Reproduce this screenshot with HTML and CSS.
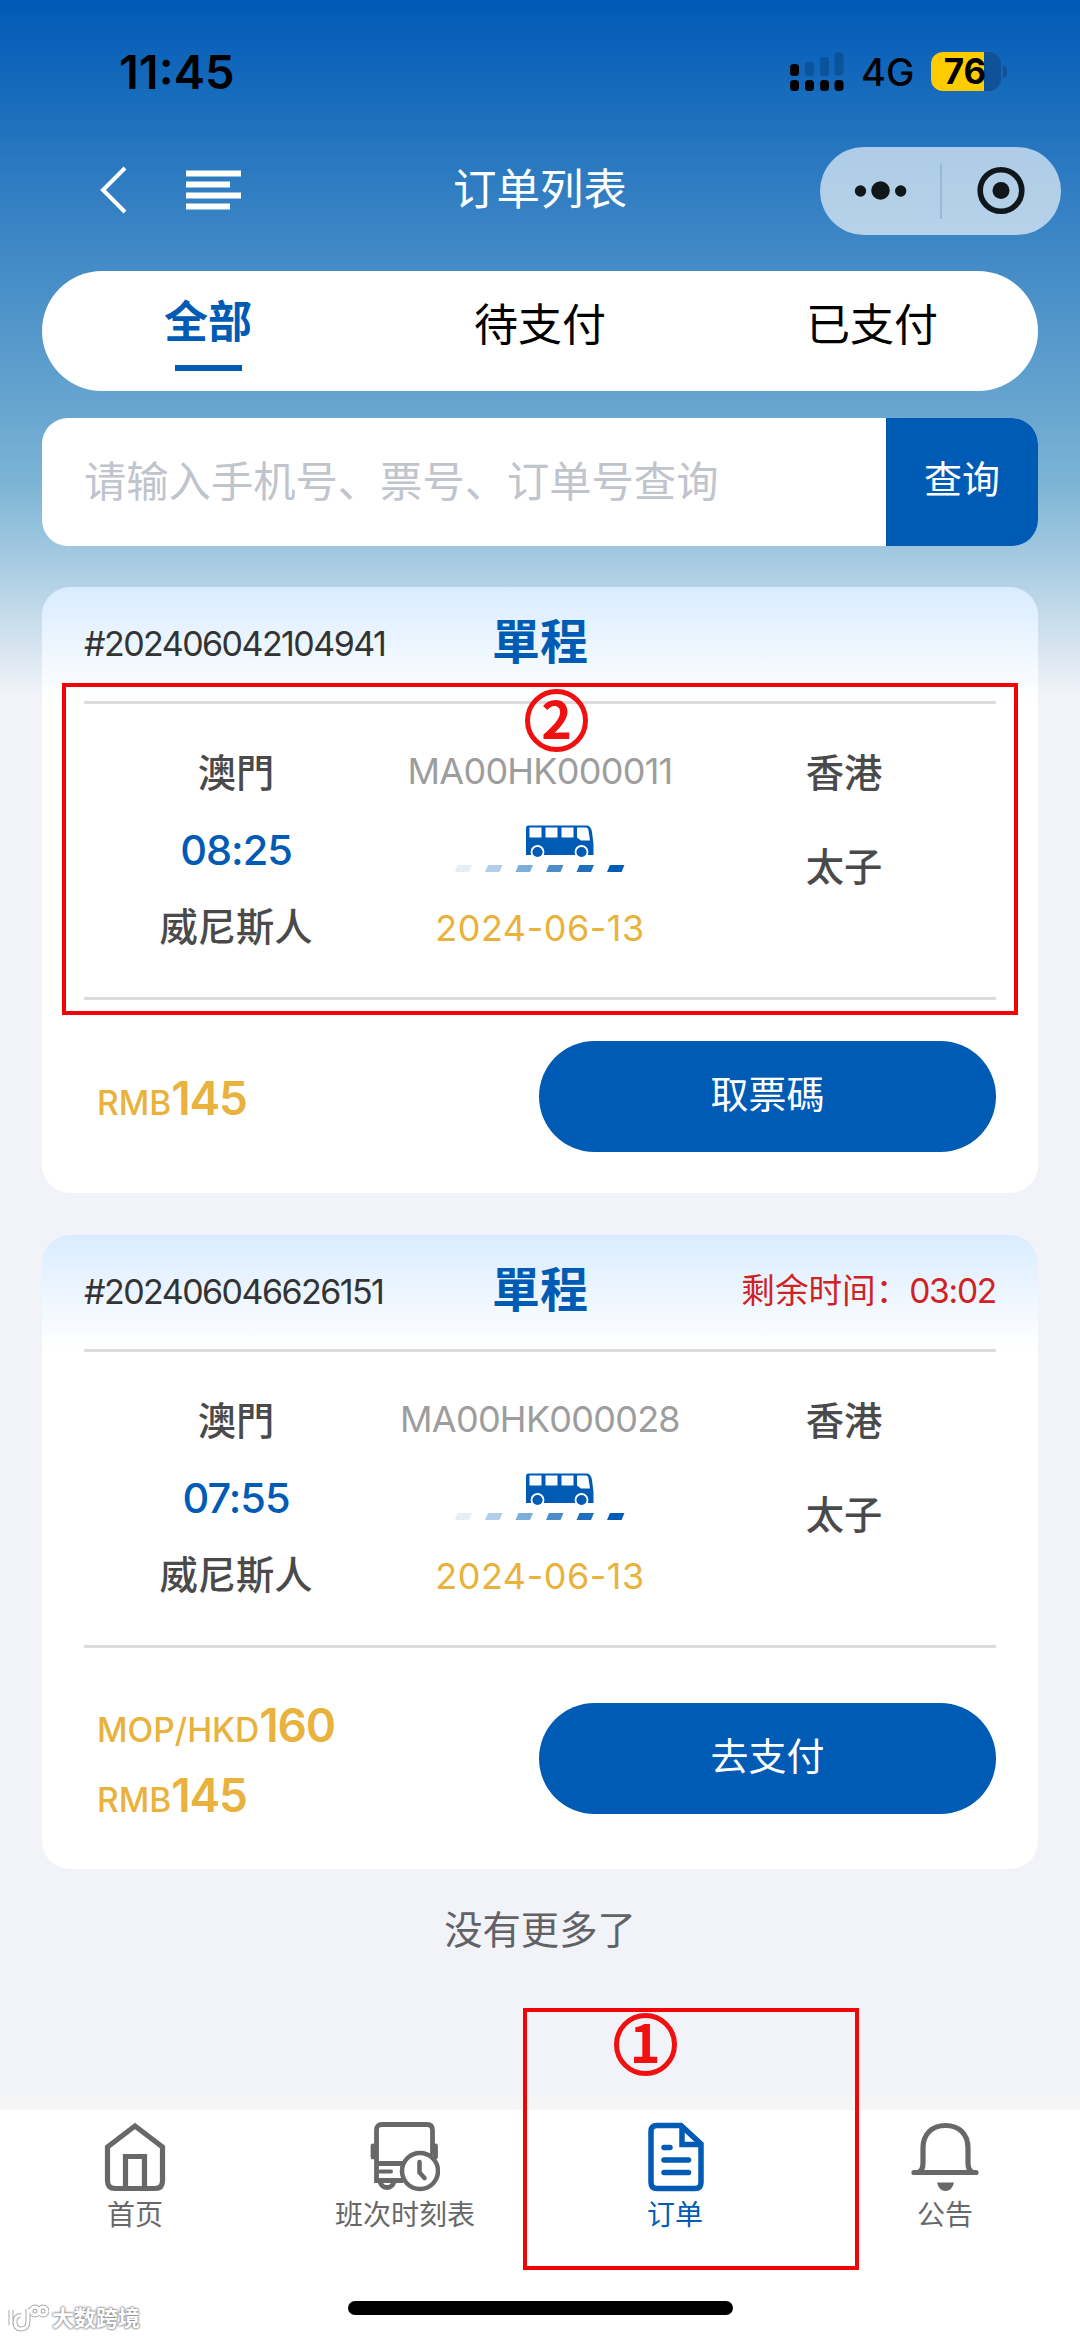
FILE: index.html
```html
<!DOCTYPE html>
<html lang="zh-CN">
<head>
<meta charset="utf-8">
<title>订单列表</title>
<link rel="stylesheet" href="styles.css">
</head>
<body>
<svg width="0" height="0" class="defs">
  <symbol id="bus" viewBox="0 0 170 48">
    <path fill="#005bb5" d="M73 0.500H132Q136 1 137 7L138.500 19V30H71V3Q71 0.500 73 .5z"/>
    <path fill="#fff" d="M74.500 2.500h12v10h-12zM90.500 2.500h12v10h-12zM106.500 2.500h12v10h-12zM122 2.500h9q2 0 2.500 3l1.500 10h-9l-4-3z"/>
    <circle cx="82.500" cy="27" r="6" fill="#005bb5" stroke="#fff" stroke-width="1.800"/>
    <circle cx="126.500" cy="27" r="6" fill="#005bb5" stroke="#fff" stroke-width="1.800"/>
    <g fill="#005bb5">
      <path opacity=".1" d="M2.500 40H17l-3 7H0z"/><path opacity=".3" d="M33 40h14.500l-3 7H30z"/>
      <path opacity=".5" d="M63.500 40H78l-3 7H60.500z"/><path opacity=".7" d="M94 40h14.500l-3 7H91z"/>
      <path opacity=".88" d="M124.500 40H139l-3 7h-14.500z"/><path d="M155 40h14.500l-3 7H152z"/>
    </g>
  </symbol>
</svg>
<div class="screen">
  <header class="status">
    <span class="clock">11:45</span>
    <svg class="signal" width="56" height="40" viewBox="0 0 56 40">
      <g fill="#003a70" opacity=".4"><rect x="16" y="10" width="9" height="14" rx="3"/><rect x="31" y="5" width="9" height="19" rx="3"/><rect x="45.500" y="0.500" width="9" height="23" rx="3"/></g>
      <rect x="1" y="12" width="9" height="12" rx="3.500"/><rect x="1" y="28" width="9" height="11" rx="3.500"/><rect x="16" y="28" width="9" height="11" rx="3.500"/><rect x="31" y="28" width="9" height="11" rx="3.500"/><rect x="45.500" y="28" width="9" height="11" rx="3.500"/>
    </svg>
    <span class="net">4G</span>
    <span class="battery">76</span><span class="nub"></span>
  </header>
  <nav class="titlebar">
    <svg class="back" width="30" height="50" viewBox="0 0 30 50"><path d="M26 2L4 24l22 22" fill="none" stroke="#fff" stroke-width="4"/></svg>
    <svg class="menu" width="56" height="42" viewBox="0 0 56 42"><path d="M0 3.500h55M0 14.500h44M0 25.500h55M0 36.500h44" stroke="#fff" stroke-width="6"/></svg>
    <h1 class="title">订单列表</h1>
    <svg class="capsule" width="241" height="88" viewBox="0 0 241 88">
      <rect width="241" height="88" rx="44" fill="#fff" fill-opacity=".63"/>
      <path d="M121 16.500v55.500" stroke="#8fb0cc" stroke-width="1.500"/>
      <g fill="#10171b"><circle cx="40.500" cy="44" r="5.700"/><circle cx="60.500" cy="43.500" r="9.300"/><circle cx="80.700" cy="44" r="5.700"/><circle cx="181" cy="43.500" r="8.500"/></g>
      <circle cx="181" cy="43.500" r="20.800" fill="none" stroke="#10171b" stroke-width="5.600"/>
    </svg>
  </nav>
  <div class="tabs"><span class="tab active">全部</span><span class="tab">待支付</span><span class="tab">已支付</span></div>
  <div class="search"><span class="placeholder">请输入手机号、票号、订单号查询</span><span class="query">查询</span></div>

  <section class="card">
    <div class="card-head"><span class="order">#202406042104941</span><b class="kind">單程</b><span class="timer"></span></div>
    <div class="trip">
      <div class="col"><span>澳門</span><span class="time">08:25</span><span>威尼斯人</span></div>
      <div class="col"><span class="code">MA00HK000011</span><svg class="busline"><use href="#bus"/></svg><span class="date">2024-06-13</span></div>
      <div class="col wide"><span>香港</span><span>太子</span></div>
      <div class="frame trip-frame"></div><div class="mark trip-mark">2</div>
    </div>
    <div class="card-foot"><div class="prices"><div class="price">RMB<b>145</b></div></div><span class="btn">取票碼</span></div>
  </section>

  <section class="card second">
    <div class="card-head"><span class="order">#202406046626151</span><b class="kind">單程</b><span class="timer">剩余时间：<span class="left">03:02</span></span></div>
    <div class="trip">
      <div class="col"><span>澳門</span><span class="time">07:55</span><span>威尼斯人</span></div>
      <div class="col"><span class="code">MA00HK000028</span><svg class="busline"><use href="#bus"/></svg><span class="date">2024-06-13</span></div>
      <div class="col wide"><span>香港</span><span>太子</span></div>
    </div>
    <div class="card-foot"><div class="prices"><div class="price">MOP/HKD<b>160</b></div><div class="price">RMB<b>145</b></div></div><span class="btn">去支付</span></div>
  </section>
  <p class="end">没有更多了</p>

  <footer class="bottom">
    <div class="item">
      <svg width="70" height="70" viewBox="0 0 70 70" fill="none" stroke="#686868" stroke-width="5.200"><path d="M35 4L62.500 25v34q0 7.500-7.500 7.500H15Q7.500 66.500 7.500 59V25z"/><path d="M25.500 66V34.500h19V66"/></svg>
      <span>首页</span>
    </div>
    <div class="item">
      <svg width="70" height="70" viewBox="0 0 70 70" fill="none" stroke="#686868" stroke-width="4.800"><path d="M33 58.500H6.500V8q0-5.500 5.500-5.500h45q5.500 0 5.500 5.500v25M7 41.500h28" /><path d="M3 24v11M65.500 24v11" stroke-linecap="round"/><path d="M10 49.500h11" stroke-width="4" stroke-linecap="round"/><path d="M10 60q2 5.500 7 5.500t7-5.500"/><circle cx="50" cy="49" r="18" fill="#fff" stroke-width="4.500"/><path d="M49.500 40v10.500l5 5.500" stroke-linecap="round" stroke-width="4.500"/></svg>
      <span>班次时刻表</span>
    </div>
    <div class="item on">
      <svg width="70" height="70" viewBox="0 0 70 70" fill="none" stroke="#005bb5" stroke-width="5.500"><path d="M41 3.500H17q-6 0-6 6v51q0 6 6 6h38q6 0 6-6V22z"/><path d="M42 4v18.500h18"/><path d="M24 25.500h6M24 38h24.500M24 50.500h24.500" stroke-linecap="round"/></svg>
      <span>订单</span>
    </div>
    <div class="item">
      <svg width="70" height="70" viewBox="0 0 70 70" fill="none" stroke="#686868" stroke-width="5.200"><path d="M9 50q4-2 4-9V26C13 12 22 3.500 35.500 3.500S58 12 58 26v15q0 7 4 9"/><path d="M4 50.500h62" stroke-linecap="round"/><path d="M27 60.500h17q-2 8.500-8.500 8.500T27 60.500z" fill="#686868" stroke="none"/></svg>
      <span>公告</span>
    </div>
    <div class="frame nav-frame"></div><div class="mark nav-mark">1</div>
    <div class="home-bar"></div>
    <div class="watermark">
      <svg width="42" height="30" viewBox="0 0 42 30" fill="none"><g stroke="#aaa" stroke-width="5"><path d="M4 7v15M14 13q-6-1-6 6t6 7q7 0 7-8V6M21 9q2-3 4-2"/><circle cx="28" cy="8" r="4"/><circle cx="36" cy="8" r="4"/></g><g stroke="#fff" stroke-width="3"><path d="M4 7v15M14 13q-6-1-6 6t6 7q7 0 7-8V6M21 9q2-3 4-2"/><circle cx="28" cy="8" r="4"/><circle cx="36" cy="8" r="4"/></g></svg>
      <span>大数跨境</span>
    </div>
  </footer>
</div>
</body>
</html>
```
FILE: styles.css
```css
* { box-sizing: border-box; }
body { margin: 0; }
.defs { position: absolute; }
.screen {
  width: 1080px; height: 2337px; overflow: hidden;
  display: flex; flex-direction: column;
  font-family: Inter, "Noto Sans CJK SC", sans-serif;
  background: linear-gradient(#005ab6 0, #7ab3d4 480px, #f1f3f8 695px);
}
.status { height: 147px; padding: 52px 73px 0 119px; display: flex; align-items: flex-start; line-height: 40px; }
.clock { font-size: 47px; font-weight: 600; margin-right: auto; }
.signal { margin-right: 16px; }
.net { font-size: 38px; font-weight: 500; width: 70px; }
.battery {
  width: 70px; height: 39px; border-radius: 12px; text-align: center; padding-right: 2px;
  background: linear-gradient(90deg, #ffcc00 53px, #105297 53px);
  font-size: 35px; font-weight: 700; line-height: 39px;
}
.nub { width: 4px; height: 12px; margin: 14px 0 0 2px; border-radius: 0 4px 4px 0; background: #105297; }
.titlebar { height: 88px; padding: 0 19px 0 99px; display: flex; align-items: center; }
.menu { margin-left: 57px; }
.title { margin: 0 0 0 211px; font-size: 43.5px; font-weight: 400; color: #fff; line-height: 85px; height: 88px; }
.capsule { margin-left: auto; }
.tabs { height: 120px; margin: 36px 42px 0; border-radius: 60px; background: #fff; display: grid; grid-template-columns: repeat(3, 1fr); }
.tab { font-size: 44px; text-align: center; line-height: 109px; color: #000; }
.active { font-weight: 700; color: #005bb5; line-height: 103px; }
.active::after { content: ""; display: block; width: 67px; height: 6px; margin: -9px auto 0; background: #005bb5; }
.search { height: 128px; margin: 27px 42px 0; border-radius: 26px; background: #fff; overflow: hidden; display: flex; line-height: 128px; }
.placeholder { flex: 1; padding-left: 42px; font-size: 42.3px; color: #c0c4cc; }
.query { width: 152px; background: #005bb5; color: #fff; font-size: 38px; text-align: center; line-height: 122px; }
.card { margin: 41px 42px 0; padding: 0 42px; height: 606px; border-radius: 28px; background: linear-gradient(#d9ecff, #fff 114px); display: flex; flex-direction: column; }
.second { margin-top: 42px; height: 634px; }
.card-head { height: 114px; display: grid; grid-template-columns: 1fr auto 1fr; line-height: 113px; }
.order { font-size: 34px; color: #333; letter-spacing: -1.55px; }
.kind { font-size: 48px; color: #005bb5; font-family: Inter, "Noto Sans CJK TC", sans-serif; line-height: 110px; }
.timer { font-size: 33.6px; color: #d02222; text-align: right; line-height: 111px; }
.left { letter-spacing: -1.3px; }
.trip {
  position: relative; height: 299px; padding-top: 31px; border: solid #dcdcdc; border-width: 3px 0;
  display: grid; grid-template-columns: 1fr 1fr 1fr; text-align: center;
  font-size: 38.3px; font-weight: 500; color: #4a4a4a; line-height: 77px;
  font-family: Inter, "Noto Sans CJK TC", sans-serif;
}
.col { display: flex; flex-direction: column; align-items: center; }
.wide { line-height: 94px; margin-top: -9px; }
.time { font-size: 41.5px; color: #005bb5; letter-spacing: -1px; }
.code { font-size: 36px; font-weight: 400; color: #9d9d9d; line-height: 72px; letter-spacing: -.75px; }
.busline { width: 170px; height: 48px; margin: 18px 0; }
.date { font-size: 36px; font-weight: 400; color: #e8b23c; line-height: 75px; letter-spacing: .5px; }
.card-foot { flex: 1; display: flex; justify-content: space-between; align-items: center; padding-left: 13px; }
.prices { padding-top: 12px; }
.price { font-size: 33.5px; font-weight: 500; color: #e8b23c; line-height: 70px; }
.price b { font-size: 46px; font-weight: 600; line-height: 1; letter-spacing: -1.2px; }
.btn { width: 457px; height: 111px; border-radius: 56px; background: #005bb5; color: #fff; font-size: 38px; line-height: 107px; text-align: center; font-family: Inter, "Noto Sans CJK TC", sans-serif; }
.end { margin: 41px 0 0; height: 40px; line-height: 40px; font-size: 38.3px; text-align: center; color: #606266; }
.bottom { position: relative; margin-top: auto; height: 241px; background: #fff; border-top: 14px solid #f5f5f5; display: grid; grid-template-columns: repeat(4, 1fr); }
.item { display: flex; flex-direction: column; align-items: center; padding-top: 12px; font-size: 28px; line-height: 46px; color: #686868; }
.on { color: #005bb5; }
.frame { position: absolute; border: 4.5px solid #f30404; }
.trip-frame { left: -22px; top: -21px; width: 956px; height: 332px; }
.nav-frame { left: 523px; top: -102px; width: 336px; height: 262px; }
.mark {
  position: absolute; width: 63px; height: 63px; border: 5px solid #f01010; border-radius: 50%;
  color: #f01010; font: 700 52px/46px "Noto Sans CJK SC", sans-serif; text-align: center;
}
.trip-mark { left: 441px; top: -15px; }
.nav-mark { left: 613.5px; top: -97px; }
.home-bar { position: absolute; left: 348px; top: 191px; width: 385px; height: 14px; border-radius: 7px; background: #000; }
.watermark {
  position: absolute; left: 7px; top: 191px; display: flex; align-items: center; gap: 3px;
  font-size: 22px; font-weight: 700; line-height: 34px; color: #fff;
  text-shadow: 0 0 2px #888, 0 0 2px #888, 0 0 3px #999;
}
```
